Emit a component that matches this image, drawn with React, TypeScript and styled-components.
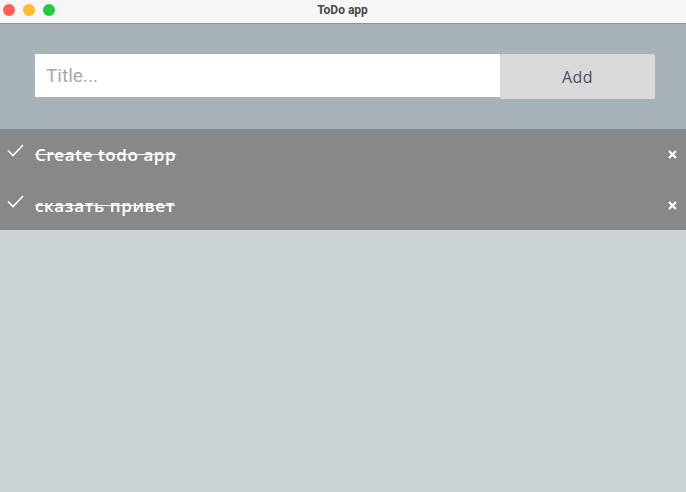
import React, {useState} from "react";
import styled, {createGlobalStyle} from "styled-components";

const GlobalStyle = createGlobalStyle`
  html, body {
    margin: 0;
    padding: 0;
    height: 100%;
    background: #cad2d5;
    font-family: "Open Sans", "Liberation Sans", sans-serif;
  }
`;

const Window = styled.div`
  width: 686px;
  height: 492px;
  display: flex;
  flex-direction: column;
  background: #cad2d5;
  overflow: hidden;
`;

const TitleBar = styled.div`
  height: 23px;
  flex-shrink: 0;
  display: flex;
  align-items: center;
  background: #f6f6f6;
  border-bottom: 1px solid #8e9597;
`;

const Lights = styled.div`
  display: flex;
  gap: 8px;
  padding-left: 3px;
  margin-top: -3px;
`;

const Light = styled.span<{ $color: string }>`
  width: 12px;
  height: 12px;
  border-radius: 50%;
  background: ${({$color}) => $color};
`;

const WindowTitle = styled.div`
  flex: 1;
  text-align: center;
  margin-left: -56px;
  margin-top: -4px;
  font-family: "Roboto", "Liberation Sans", sans-serif;
  font-weight: bold;
  font-size: 12px;
  color: #4a4a4a;
`;

const Header = styled.form`
  display: flex;
  padding: 30px 31px 30px 35px;
  background: #a7b3b8;
`;

const TitleInput = styled.input`
  flex: 1;
  height: 43px;
  box-sizing: border-box;
  border: none;
  outline: none;
  padding: 0 11px;
  font-family: "Roboto", "Liberation Sans", sans-serif;
  font-size: 19px;
  color: #333;

  &::placeholder {
    color: #a9a9a9;
  }
`;

const AddButton = styled.button`
  width: 155px;
  height: 45px;
  border: none;
  border-radius: 2px;
  background: #d9d9d9;
  color: #4f4f4f;
  font-family: "Open Sans", "Liberation Sans", sans-serif;
  font-size: 16px;
  letter-spacing: 0.4px;
  cursor: pointer;
`;

const List = styled.ul`
  list-style: none;
  margin: 0;
  padding: 0;
  background: #888888;
`;

const Item = styled.li`
  height: 51px;
  display: flex;
  align-items: center;
  padding: 0 8px 0 7px;
  box-sizing: border-box;

  & + & {
    height: 50px;
  }
`;

const Check = styled.svg`
  width: 17px;
  height: 13px;
  margin-top: -8px;
  flex-shrink: 0;
`;

const ItemText = styled.span<{ $done: boolean }>`
  flex: 1;
  margin-left: 11px;
  color: #fff;
  font-family: "Open Sans", "Liberation Sans", sans-serif;
  font-weight: 600;
  font-size: 17px;
  letter-spacing: 0.6px;
  text-decoration: ${({$done}) => ($done ? "line-through" : "none")};
`;

const RemoveButton = styled.svg`
  width: 9px;
  height: 9px;
  margin-right: 1px;
  cursor: pointer;
`;

interface Todo {
    id: number
    title: string
    done: boolean
}

export default function App() {
    const [todos, setTodos] = useState<Todo[]>([
        {id: 1, title: "Create todo app", done: true},
        {id: 2, title: "сказать привет", done: true},
    ]);
    const [title, setTitle] = useState("");

    const add = (e: React.FormEvent) => {
        e.preventDefault();
        if (!title.trim()) return;
        setTodos([...todos, {id: Date.now(), title, done: false}]);
        setTitle("");
    };

    return (
        <>
            <GlobalStyle/>
            <Window>
                <TitleBar>
                    <Lights>
                        <Light $color="#fe5f57"/>
                        <Light $color="#febc2e"/>
                        <Light $color="#28c840"/>
                    </Lights>
                    <WindowTitle>ToDo app</WindowTitle>
                </TitleBar>
                <Header onSubmit={add}>
                    <TitleInput
                        placeholder="Title..."
                        value={title}
                        onChange={(e) => setTitle(e.target.value)}
                    />
                    <AddButton type="submit">Add</AddButton>
                </Header>
                <List>
                    {todos.map((todo) => (
                        <Item key={todo.id}>
                            <Check viewBox="0 0 17 13" fill="none" stroke="#fff" strokeWidth="1.6">
                                <polyline points="1,6.5 6,11.5 16,1"/>
                            </Check>
                            <ItemText $done={todo.done}>{todo.title}</ItemText>
                            <RemoveButton
                                viewBox="0 0 9 9"
                                stroke="#fff"
                                strokeWidth="2.2"
                                onClick={() => setTodos(todos.filter((t) => t.id !== todo.id))}
                            >
                                <path d="M1 1 L8 8 M8 1 L1 8"/>
                            </RemoveButton>
                        </Item>
                    ))}
                </List>
            </Window>
        </>
    );
}
